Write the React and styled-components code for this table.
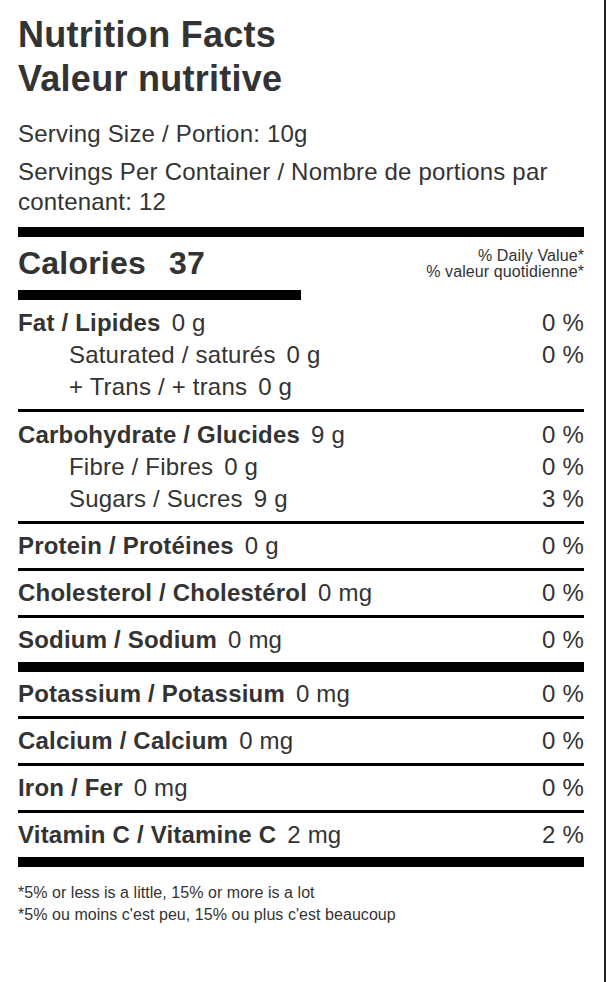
import styled, { createGlobalStyle } from "styled-components";

const GlobalStyle = createGlobalStyle`
  html, body {
    margin: 0;
    padding: 0;
    background: #fff;
  }
  body {
    font-family: "Liberation Sans", Arial, sans-serif;
    color: #333;
    letter-spacing: 0.2px;
  }
`;

const Label = styled.div`
  box-sizing: border-box;
  width: 606px;
  min-height: 982px;
  padding: 13px 20px 0 18px;
  border-right: 2px solid #222;
`;

const Title = styled.h1`
  margin: 0;
  font-size: 36px;
  line-height: 44px;
  font-weight: 700;
  letter-spacing: 0.27px;
`;

const Serving = styled.p`
  margin: ${(props) => (props.first ? "18px" : "8px")} 0 0;
  font-size: 24px;
  line-height: 30px;
`;

const Bar = styled.div`
  height: ${(props) => props.size || 10}px;
  width: ${(props) => (props.half ? "283px" : "100%")};
  background: #000;
  margin-top: ${(props) => props.top || 0}px;
`;

const CaloriesRow = styled.div`
  display: flex;
  justify-content: space-between;
  align-items: center;
  padding: 6px 0;
`;

const Calories = styled.div`
  display: flex;
  gap: 23px;
  font-size: 32px;
  line-height: 41px;
  font-weight: 700;
`;

const DailyValue = styled.div`
  text-align: right;
  font-size: 16px;
  line-height: 16px;
  letter-spacing: 0.1px;
`;

const Group = styled.div`
  padding: ${(props) => (props.multi ? "7px 0 6px" : "6px 0")};
  border-bottom: ${(props) => (props.last ? "none" : "3px solid #000")};
`;

const Row = styled.div`
  display: flex;
  justify-content: space-between;
  font-size: 24px;
  line-height: 32px;
  padding-left: ${(props) => (props.sub ? "51px" : "0")};
`;

const Name = styled.span`
  font-weight: ${(props) => (props.sub ? 400 : 700)};
  margin-right: 11px;
`;

const Footnotes = styled.div`
  margin-top: 15px;
  font-size: 16px;
  line-height: 22px;
  letter-spacing: 0.05px;
`;

const groupsTop = [
  [
    { name: "Fat / Lipides", amount: "0 g", dv: "0 %" },
    { name: "Saturated / saturés", amount: "0 g", dv: "0 %", sub: true },
    { name: "+ Trans / + trans", amount: "0 g", sub: true },
  ],
  [
    { name: "Carbohydrate / Glucides", amount: "9 g", dv: "0 %" },
    { name: "Fibre / Fibres", amount: "0 g", dv: "0 %", sub: true },
    { name: "Sugars / Sucres", amount: "9 g", dv: "3 %", sub: true },
  ],
  [{ name: "Protein / Protéines", amount: "0 g", dv: "0 %" }],
  [{ name: "Cholesterol / Cholestérol", amount: "0 mg", dv: "0 %" }],
  [{ name: "Sodium / Sodium", amount: "0 mg", dv: "0 %" }],
];

const groupsBottom = [
  [{ name: "Potassium / Potassium", amount: "0 mg", dv: "0 %" }],
  [{ name: "Calcium / Calcium", amount: "0 mg", dv: "0 %" }],
  [{ name: "Iron / Fer", amount: "0 mg", dv: "0 %" }],
  [{ name: "Vitamin C / Vitamine C", amount: "2 mg", dv: "2 %" }],
];

const renderGroups = (groups) =>
  groups.map((rows, i) => (
    <Group key={i} last={i === groups.length - 1} multi={rows.length > 1}>
      {rows.map((r) => (
        <Row key={r.name} sub={r.sub}>
          <span>
            <Name sub={r.sub}>{r.name}</Name>
            {r.amount}
          </span>
          <span>{r.dv}</span>
        </Row>
      ))}
    </Group>
  ));

const App = () => {
  return (
    <>
      <GlobalStyle />
      <Label>
        <Title>
          Nutrition Facts
          <br />
          Valeur nutritive
        </Title>
        <Serving first>Serving Size / Portion: 10g</Serving>
        <Serving>Servings Per Container / Nombre de portions par contenant: 12</Serving>

        <Bar top={10} />
        <CaloriesRow>
          <Calories>
            <span>Calories</span>
            <span>37</span>
          </Calories>
          <DailyValue>
            % Daily Value*
            <br />
            % valeur quotidienne*
          </DailyValue>
        </CaloriesRow>
        <Bar half />

        {renderGroups(groupsTop)}
        <Bar />
        {renderGroups(groupsBottom)}
        <Bar />

        <Footnotes>
          *5% or less is a little, 15% or more is a lot
          <br />
          *5% ou moins c'est peu, 15% ou plus c'est beaucoup
        </Footnotes>
      </Label>
    </>
  );
};

export default App;
